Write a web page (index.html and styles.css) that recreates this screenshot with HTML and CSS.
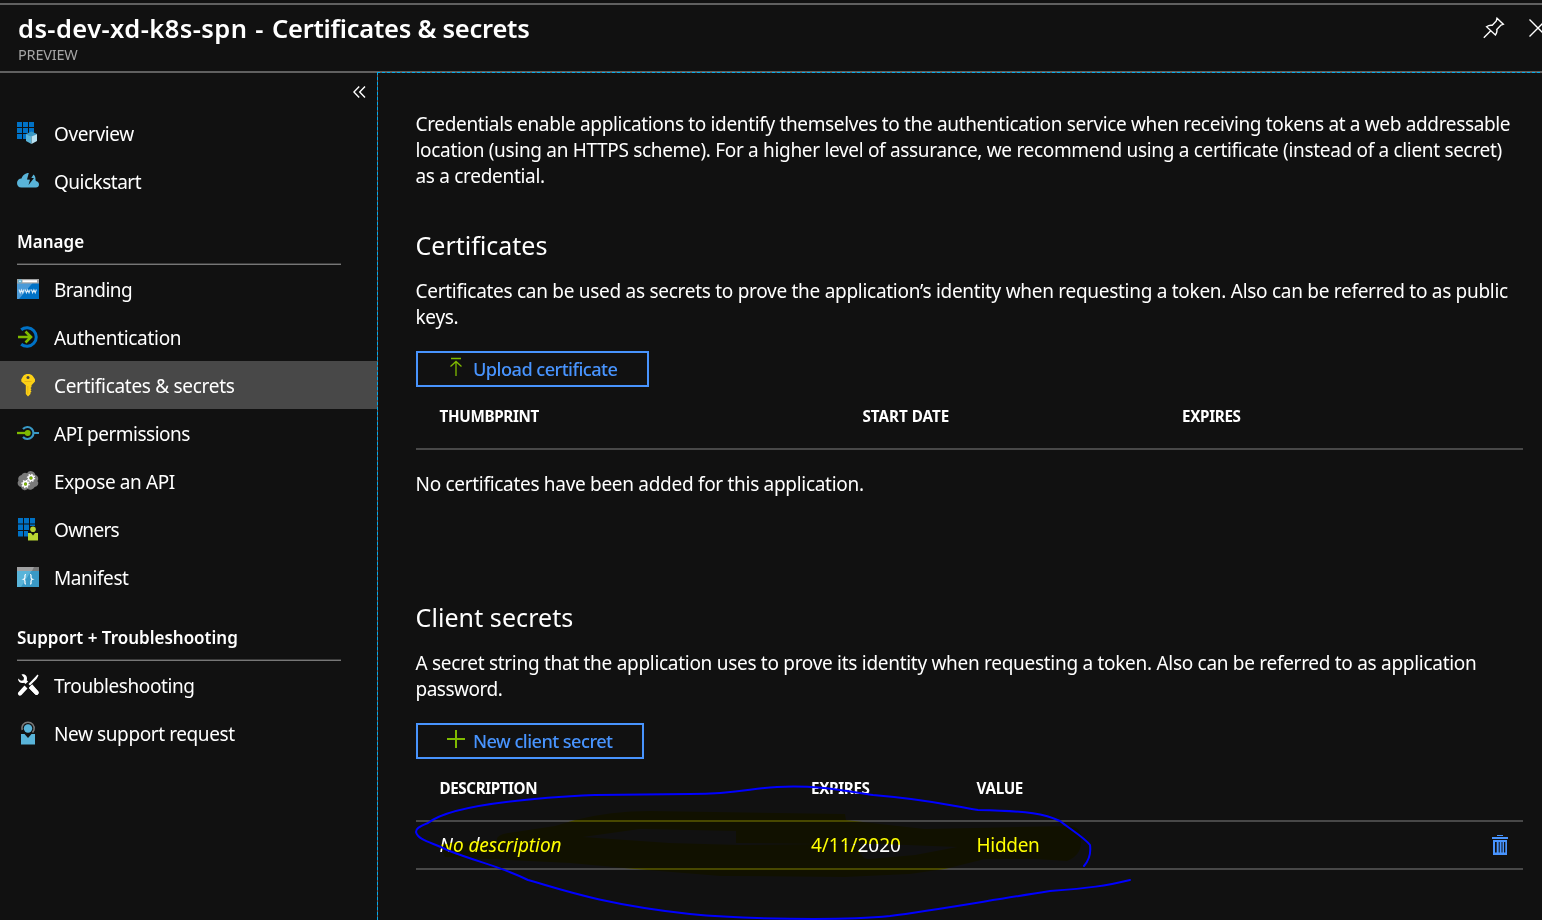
FILE: index.html
```html
<!DOCTYPE html>
<html lang="en">
<head>
<meta charset="utf-8">
<title>Certificates &amp; secrets</title>
<link rel="stylesheet" href="styles.css">
</head>
<body>
<div class="blade">
  <header class="header">
    <div class="titles">
      <h1 class="title"><span class="title-app">ds-dev-xd-k8s-spn - </span><span class="title-page">Certificates &amp; secrets</span></h1>
      <div class="subtitle">PREVIEW</div>
    </div>
    <div class="actions">
      <svg class="pin" width="22" height="22" viewBox="0 0 22 22" fill="none" stroke="#fff" stroke-width="1.4"><path d="M14 1.2 20.3 7.3 18 8 13.8 12.5C14.300 14.500 13.500 16.500 12.400 18L3.500 9.700C5.500 8.300 7.500 8 9.300 8.300L13.300 4ZM7.500 14 .8 20.800"/></svg>
      <svg class="close" width="18" height="18" viewBox="0 0 18 18" fill="none" stroke="#fff" stroke-width="1.4"><path d="M.5.500 17.500 17.500M17.500.500.500 17.500"/></svg>
    </div>
  </header>
  <div class="body">
    <nav class="menu">
      <div class="collapse"><svg width="13" height="12" viewBox="0 0 13 12" fill="none" stroke="#fff" stroke-width="1.400"><path d="M6.200.500.900 6l5.300 5.500M12 .500 6.700 6l5.300 5.500"/></svg></div>
      <a class="item"><svg class="icon" viewBox="0 0 22 22"><path fill="#0072c6" d="M0 0h5v5H0zM6 0h5v5H6zM12 0h5v5h-5zM0 6h5v5H0zM6 6h5v5H6zM12 6h5v5h-5zM0 12h5v5H0zM6 12h5v5H6z"/><path fill="#3999c6" d="m14.500 9.500 5.500 2.500-5.500 3-5.500-3z"/><path fill="#59b4d9" d="m9 12 5.500 2.600V22L9 19z"/><path fill="#b9e3f3" d="m20 12-5.500 2.600V22l5.500-3z"/></svg><span class="t-overview">Overview</span></a>
      <a class="item"><svg class="icon" viewBox="0 0 22 22"><path fill="#59b4d9" d="M4.500 17.500C1.500 17.500 0 15.500 0 13c0-2.600 2-4.300 4.500-4.400C5.300 5.500 8 3 11.800 3L10 9.500l3 .2L11.500 15 17 8h-2.700L16.500 4.500c1.500 1 2.200 3 2 5.500l.5 1c1.800.6 3 1.800 3 3.500s-1.200 3-3 3z"/></svg><span class="t-quick">Quickstart</span></a>
      <h2 class="group"><span class="t-manage">Manage</span></h2>
      <a class="item"><svg class="icon" viewBox="0 0 22 22"><path fill="#0072c6" d="M0 4.500h22V21H0z"/><path fill="#4b9bd8" d="M0 4.500h16L2 21H0z"/><path fill="#a0a1a2" d="M0 1h22v4.500H0z"/><circle cx="3" cy="3.200" r="1.900" fill="#59b4d9"/><circle cx="3" cy="3.200" r=".8" fill="#fff"/><path fill="#fff" d="M5.500 2.200H20v2.100H5.500z"/><path fill="none" stroke="#d6eaf8" stroke-width="1.100" d="m2 11.500 1.200 3.300 1.300-3 1.300 3L7 11.500m1.200 0 1.200 3.300 1.300-3 1.300 3 1.200-3.300m1.200 0 1.200 3.300 1.300-3 1.300 3 1.200-3.300"/></svg><span class="t-brand">Branding</span></a>
      <a class="item"><svg class="icon" viewBox="0 0 22 22"><path fill="none" stroke="#0072c6" stroke-width="3" d="M4.200 3.700A9.300 9.300 0 1 1 4.200 18.300"/><path fill="none" stroke="#7fba00" stroke-width="2.600" d="M1 11h12.500M8.500 5.500 14 11l-5.500 5.500"/></svg><span class="t-auth">Authentication</span></a>
      <a class="item active"><svg class="icon" viewBox="0 0 22 22"><path fill="#fcd116" d="M11 0c2 0 3.500.5 4.800 2L18 5.300v2.200l-3.500 3.700V13l-1 1 1 1.200-1 1.100 1 1.200-1 1v1.500L11 22.500 8.800 20v-8.800L4.300 7.500V5.300L6.200 2C7.500.5 9 0 11 0z"/><circle cx="11" cy="3.500" r="1.500" fill="#454545"/><path fill="#e8b414" d="M7.500 7h7v1h-7zM10.300 12h1v8h-1z"/></svg><span class="t-cert">Certificates &amp; secrets</span></a>
      <a class="item"><svg class="icon" viewBox="0 0 22 22"><path fill="none" stroke="#3999c6" stroke-width="2.200" d="M6 7a6 6 0 1 1 0 8M17 11h5"/><path stroke="#7fba00" stroke-width="2.300" d="M0 11h9"/><circle cx="10.700" cy="11" r="3" fill="#7fba00"/></svg><span class="t-api">API permissions</span></a>
      <a class="item"><svg class="icon" viewBox="0 0 22 22"><path fill="#7a7a7a" d="M4 17a4 4 0 0 1-2.500-6.500A4 4 0 0 1 4.500 5 4 4 0 0 1 10 3.300a4.500 4.500 0 0 1 8.300 1.500A4 4 0 0 1 20.500 11a3.700 3.700 0 0 1-2.800 6 5 5 0 0 1-7 2A4 4 0 0 1 4 17z"/><g fill="none" stroke="#fff"><circle cx="8.500" cy="14" r="2.400" stroke-width="1.500"/><circle cx="8.500" cy="14" r="3.600" stroke-width="1.300" stroke-dasharray="1.400"/><circle cx="14" cy="8" r="2.400" stroke-width="1.500"/><circle cx="14" cy="8" r="3.600" stroke-width="1.300" stroke-dasharray="1.400"/></g><g fill="#7fba00"><circle cx="8.500" cy="14" r="1.500"/><circle cx="14" cy="8" r="1.500"/></g></svg><span class="t-expose">Expose an API</span></a>
      <a class="item"><svg class="icon" viewBox="0 0 22 22"><path fill="#0072c6" d="M1 0h5v5.500H1zM7 0h5v5.500H7zM13 0h5v5.500h-5zM1 6.500h5V12H1zM7 6.500h5V12H7zM13 6.500h5V8h-5zM1 13h5v5.500H1zM7 13h4v5.500H7z"/><circle cx="16" cy="11.300" r="2.800" fill="#b8d432"/><path fill="#b8d432" d="M11 15h3l2 2.500L18 15h3v7.500H11z"/></svg><span class="t-owners">Owners</span></a>
      <a class="item"><svg class="icon" viewBox="0 0 22 22"><path fill="#3999c6" d="M0 4h22v17H0z"/><path fill="#59b4d9" d="M0 4h15L4 21H0z"/><path fill="#7a7a7a" d="M0 1h22v4H0z"/><path fill="#a0a1a2" d="M0 1h17l-2 4H0z"/><path fill="none" stroke="#fff" stroke-width="1.200" d="M9 8.500C7.500 8.500 8 10 8 11.300S7.500 13 6.500 13.300C7.500 13.600 8 14 8 15.300S7.500 18 9 18M13 8.500c1.500 0 1 1.500 1 2.800s.5 1.700 1.500 2c-1 .3-1.500.7-1.500 2s.5 2.700-1 2.700"/></svg><span class="t-manifest">Manifest</span></a>
      <h2 class="group"><span class="t-support">Support + Troubleshooting</span></h2>
      <a class="item"><svg class="icon" viewBox="0 0 22 22"><path fill="#fff" d="M4.500.5c3-.8 5.800 1.300 5.500 4.500L9.700 6.200 21 17c1 1.200.8 2.500 0 3.300-1 .9-2.200.8-3.200-.3L7.200 8.700C4.500 10 1 8.200 1 4.500L4 6.800l2.500-.5.500-2.500z"/><path fill="#111" d="m12.300 6.500 3.500 3.500L9 17 5 13z"/><path fill="#fff" d="m20.500.5 1 1-2 3.500-6.500 6.500-1.500-1.500L18 3.300zM7.500 11.500l3 3-6 6.500c-1 1-2.300.9-3 .1s-.9-2 .1-3zM13.200 12.200l2-2L21 17c1 1.200.8 2.500 0 3.300-1 .9-2.200.8-3.200-.3l-6-6z"/></svg><span class="t-trouble">Troubleshooting</span></a>
      <a class="item"><svg class="icon" viewBox="0 0 22 22"><path fill="none" stroke="#7a7a7a" stroke-width="1.500" d="M5.200 8C4 3 7.500.200 11 .200S18 3 17 8l-1.500 2.500"/><circle cx="11" cy="6.500" r="4.200" fill="#59b4d9"/><path fill="#59b4d9" d="M4 12h3.500l3.500 4 3.500-4H18v10.500H4z"/></svg><span class="t-request">New support request</span></a>
    </nav>
    <main class="content">
      <p class="para intro"><span class="l1">Credentials enable applications to identify themselves to the authentication service when receiving tokens at a web addressable</span><br><span class="l2">location (using an HTTPS scheme). For a higher level of assurance, we recommend using a certificate (instead of a client secret)</span><br><span class="l3">as a credential.</span></p>
      <section class="certs">
        <h3 class="heading h-certs">Certificates</h3>
        <p class="para"><span class="l4">Certificates can be used as secrets to prove the application’s identity when requesting a token. Also can be referred to as public</span><br><span class="l5">keys.</span></p>
        <button class="btn upload"><svg width="20" height="20" viewBox="0 0 20 20" fill="none" stroke="#7fba00" stroke-width="1.300"><path d="M5 1.500h10M4.500 9.500 10 4.500l5.500 5M10 5v14"/></svg><span>Upload certificate</span></button>
        <div class="row head cert-grid"><span class="c-thumb">THUMBPRINT</span><span class="c-start">START DATE</span><span class="c-exp">EXPIRES</span></div>
        <p class="empty"><span>No certificates have been added for this application.</span></p>
      </section>
      <section class="secrets">
        <h3 class="heading h-secrets">Client secrets</h3>
        <p class="para"><span class="l6">A secret string that the application uses to prove its identity when requesting a token. Also can be referred to as application</span><br><span class="l7">password.</span></p>
        <button class="btn new"><svg width="20" height="20" viewBox="0 0 20 20" fill="none" stroke="#7fba00" stroke-width="2"><path d="M1 10h18M10 1v18"/></svg><span>New client secret</span></button>
        <div class="row head secret-grid"><span class="c-desc">DESCRIPTION</span><span class="c-exp">EXPIRES</span><span class="c-value">VALUE</span></div>
        <div class="row data secret-grid"><em class="d-desc">No description</em><span class="d-date">4/11/2020</span><span class="d-hidden">Hidden</span>
          <svg class="trash" width="16" height="20" viewBox="0 0 16 20" fill="#4894fe"><path d="M5 0h6v1H5zM0 2h16v2H0zM1 5h14v15H1zM3 7v10.500h1.700V7zm3.700 0v10.500h1V7zm2.800 0v10.500h1V7zm2.500 0v10.500h1.300V7z" fill-rule="evenodd"/></svg></div>
      </section>
    </main>
  </div>
  <svg class="marker" viewBox="0 0 1542 920"><path fill="#ff0" fill-rule="evenodd" d="M440 845L455 842 497 840Q496 835 508 833L555 826 575 820Q610 811 650 811L845 814 846 820 880 824 925 829 1070 826Q1083 827 1081 843 1081 855 1067 861L1035 859 985 859 945 869 910 874 845 877 720 876 635 869 570 863 445 857ZM583 837L640 829 736 831V843L820 844 864 845 857 849 864 858 868 859 915 855 957 847 880 844 820 844 740 845 670 843Z"/></svg>
  <svg class="pen" viewBox="0 0 1542 920"><path d="M1084 866C1089 860 1091 852 1090 845 1085 838 1070 829 1060 821 1045 814 1030 811 978 810 950 806 935 800 873 795 840 790 815 785 777 787 750 788 740 794 690 794L595 795C530 798 450 805 428 823 418 827 416 829 416 832 418 841 435 843 447 850 480 863 500 866 528 880 560 889 600 904 690 914 740 919 840 921 890 916 930 911 980 902 1050 891 1090 888 1105 886 1130 880"/></svg>
</div>
</body>
</html>
```

FILE: styles.css
```css
* { box-sizing: border-box; }
body { margin: 0; background: #111; color: #fff; font-family: "Noto Sans", "Open Sans", sans-serif; font-size: 19px; }
h1, h2, h3, p { margin: 0; font-weight: 400; }
span, em { white-space: nowrap; }
.blade { position: relative; width: 1542px; height: 920px; overflow: hidden; display: flex; flex-direction: column; background: #111; }
.header { height: 73px; flex: none; border-bottom: 2px solid #606060; padding: 3px 0 0 18px; display: flex; justify-content: space-between; background: linear-gradient(#606060, #606060) 0 3px / 100% 2px no-repeat; }
.title { font-size: 25.500px; font-weight: 600; line-height: 30px; margin-top: 10px; }
.title-app { letter-spacing: .42px; word-spacing: 1px; white-space: pre; }
.title-page { letter-spacing: -.25px; }
.subtitle { font-size: 14.500px; line-height: 18px; color: #a6a6a6; margin-top: 2px; letter-spacing: -.2px; }
.actions { display: flex; gap: 24px; padding-top: 14px; margin-right: -5px; }
.close { margin-top: 2px; }
.body { display: flex; flex: 1; min-height: 0; }
.menu { width: 377px; flex: none; }
.collapse { height: 36px; padding: 13px 11px 0 0; display: flex; justify-content: flex-end; }
.collapse svg { display: block; }
.item { display: flex; align-items: center; height: 48px; padding: 2px 0 0 17px; gap: 15px; letter-spacing: -.4px; }
.active { background: #484848; }
.icon { width: 22px; height: 22px; flex: none; overflow: visible; margin-top: -3px; }
.t-auth, .t-cert { letter-spacing: -.3px; }
.t-quick, .t-brand, .t-api { letter-spacing: -.5px; }
.t-owners { letter-spacing: -.7px; }
.group { margin-left: 17px; width: 324px; height: 60px; padding-top: 24px; border-bottom: 1px solid #777; box-shadow: inset 0 -1px #3c3c3c; font-size: 17px; font-weight: 600; line-height: 26px; }
.content { flex: 1; min-width: 0; margin-top: -1px; padding: 39px 19px 0 39px; position: relative; z-index: 1; background: repeating-linear-gradient(90deg, #00abec 0 3px, #606060 3px 5px) 0 0 / 100% 1px no-repeat, repeating-linear-gradient(#00abec 0 3px, #606060 3px 5px) 0 0 / 1px 100% no-repeat; }
.para { line-height: 26px; }
.para, .empty { letter-spacing: -.3px; margin-left: -.5px; }
.l1 { letter-spacing: -.343px; }
.l2 { letter-spacing: -.32px; }
.l4 { letter-spacing: -.283px; }
.l6 { letter-spacing: -.29px; }
.l7 { letter-spacing: -.5px; }
.heading { font-size: 25px; line-height: 34px; margin: 39px 0 0 -.5px; }
.h-secrets { letter-spacing: .08px; }
.certs .para, .secrets .para { margin-top: 16px; }
.btn { display: flex; align-items: center; height: 36px; margin: 21px 0 0; padding: 0 0 0 28px; gap: 7px; border: 2px solid #4894fe; background: none; color: #4894fe; font: 500 18.200px "Noto Sans", sans-serif; letter-spacing: -.55px; }
.btn svg { margin-top: -4px; }
.upload { width: 233px; }
.new { width: 228px; }
.row { display: grid; align-items: center; padding-left: 23.500px; }
.head { height: 63px; padding-bottom: 3px; border-bottom: 2px solid #484848; font-size: 15.200px; font-weight: 700; letter-spacing: -.32px; }
.c-start { letter-spacing: 0; }
.c-desc { letter-spacing: -.4px; }
.cert-grid { grid-template-columns: 423px 319.500px 1fr; }
.secret-grid { grid-template-columns: 371.500px 165.500px 515.500px 1fr; }
.empty { margin-top: 21px; line-height: 26px; }
.secrets { margin-top: 103px; }
.data { height: 48px; border-bottom: 2px solid #484848; }
.d-desc, .d-date { letter-spacing: -.05px; }
.d-hidden { letter-spacing: -.3px; }
.marker, .pen { position: absolute; z-index: 3; inset: 0; width: 1542px; height: 920px; pointer-events: none; }
.marker { mix-blend-mode: multiply; }
.pen { z-index: 4; fill: none; stroke: #00f; stroke-width: 2; stroke-linecap: round; stroke-linejoin: round; }
```
